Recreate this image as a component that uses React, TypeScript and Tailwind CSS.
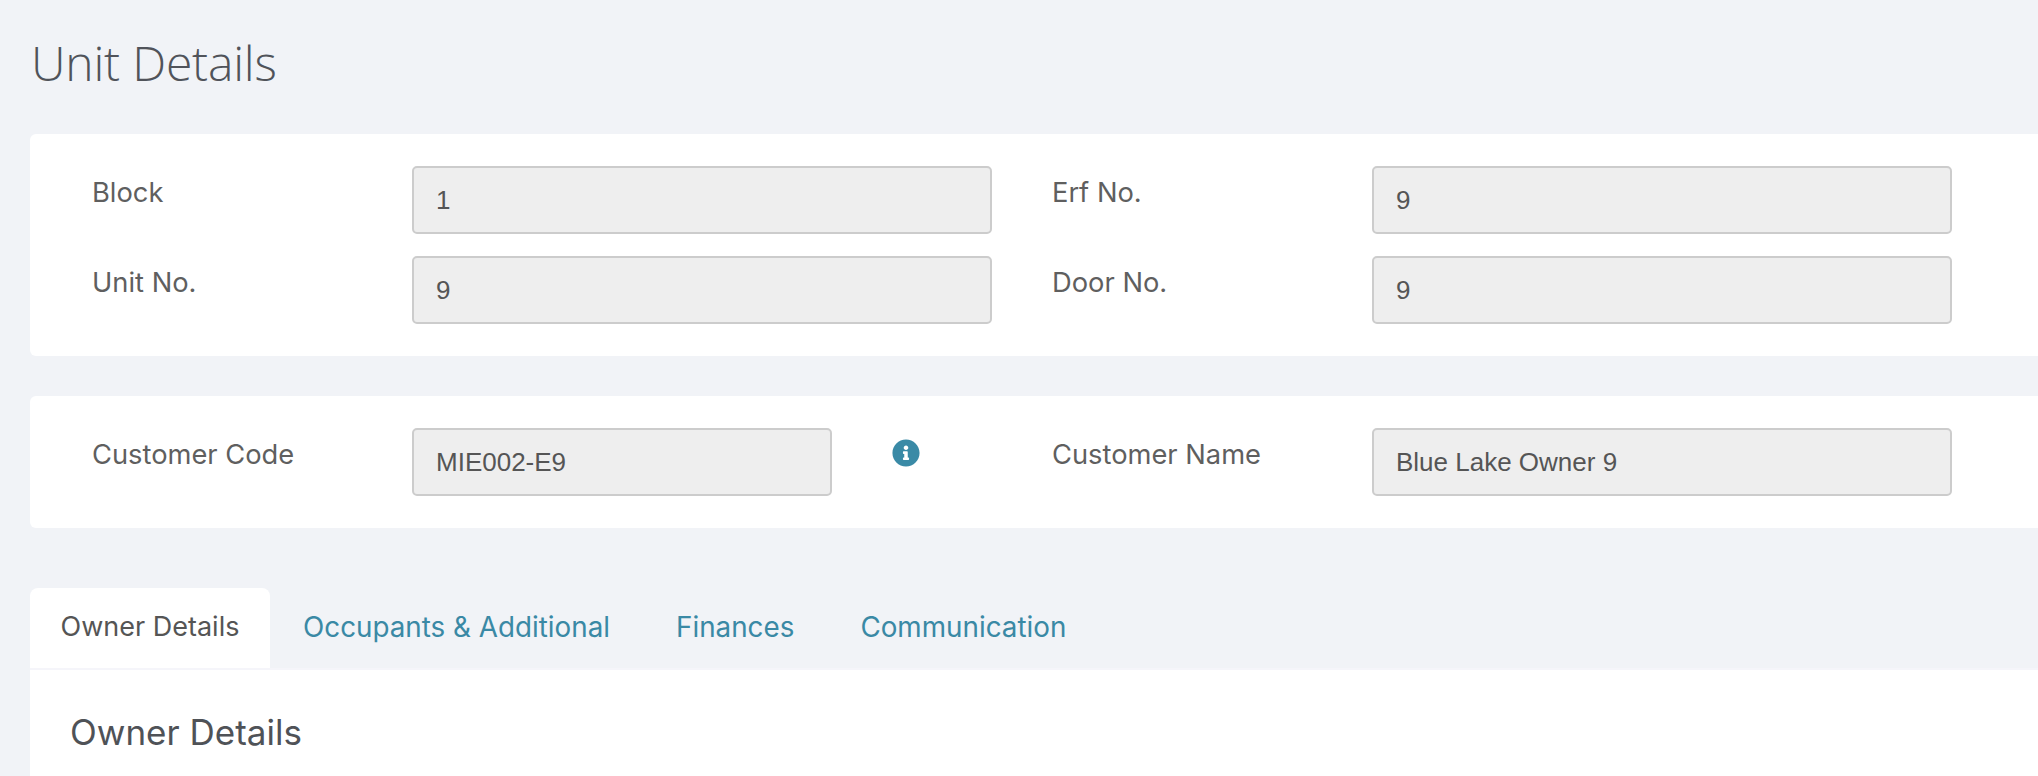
import { FaInfoCircle } from "react-icons/fa";

const label = "pt-[3px] text-[27.3px] leading-[48px] text-[#5f5f5f] font-['Inter',sans-serif]";

function Field({ value, className = "w-[580px]" }: { value: string; className?: string }) {
  return (
    <div
      className={`flex h-[68px] items-center rounded-[5px] border-2 border-[#cccccc] bg-[#eeeeee] px-[22px] font-['Liberation_Sans',sans-serif] text-[26px] text-[#555555] ${className}`}
    >
      {value}
    </div>
  );
}

function Row({ left, right, leftValue, rightValue }: { left: string; right: string; leftValue: string; rightValue: string }) {
  return (
    <div className="flex">
      <div className={`w-[320px] ${label}`}>{left}</div>
      <Field value={leftValue} />
      <div className={`ml-[60px] w-[320px] ${label}`}>{right}</div>
      <Field value={rightValue} />
    </div>
  );
}

const tabs = ["Occupants & Additional", "Finances", "Communication"];

export default function App() {
  return (
    <div className="h-[776px] overflow-hidden bg-[#f1f3f7] pl-[30px]">
      <h1 className="pt-[30px] pb-[38px] pl-[1px] font-['Open_Sans',sans-serif] text-[48px] leading-[66px] font-light tracking-[-0.2px] text-[#50535a]">
        Unit Details
      </h1>

      <div className="flex flex-col gap-[22px] rounded-l-[6px] bg-white py-[32px] pl-[62px]">
        <Row left="Block" leftValue="1" right="Erf No." rightValue="9" />
        <Row left="Unit No." leftValue="9" right="Door No." rightValue="9" />
      </div>

      <div className="mt-[40px] flex rounded-l-[6px] bg-white py-[32px] pl-[62px]">
        <div className={`w-[320px] ${label}`}>Customer Code</div>
        <Field value="MIE002-E9" className="w-[420px]" />
        <div className="w-[220px] pt-[11px] pl-[60px]">
          <FaInfoCircle className="h-[28px] w-[28px] text-[#3a8aa6]" />
        </div>
        <div className={`w-[320px] ${label}`}>Customer Name</div>
        <Field value="Blue Lake Owner 9" />
      </div>

      <div className="mt-[60px] flex h-[82px] border-b-2 border-[#f5f5fa] font-['Inter',sans-serif]">
        <div className="flex h-[80px] w-[240px] items-center justify-center rounded-t-[8px] bg-white pb-[2px] text-[27px] text-[#555555]">
          Owner Details
        </div>
        {tabs.map((tab) => (
          <div key={tab} className="flex h-[80px] items-center px-[33px] text-[27.8px] text-[#3a89a5] first:pl-[35px]">
            {tab}
          </div>
        ))}
      </div>

      <div className="h-[106px] bg-white pt-[38px] pl-[40px] font-['Inter',sans-serif] text-[35px] leading-[48px] font-normal text-[#4f5257]">
        Owner Details
      </div>
    </div>
  );
}
